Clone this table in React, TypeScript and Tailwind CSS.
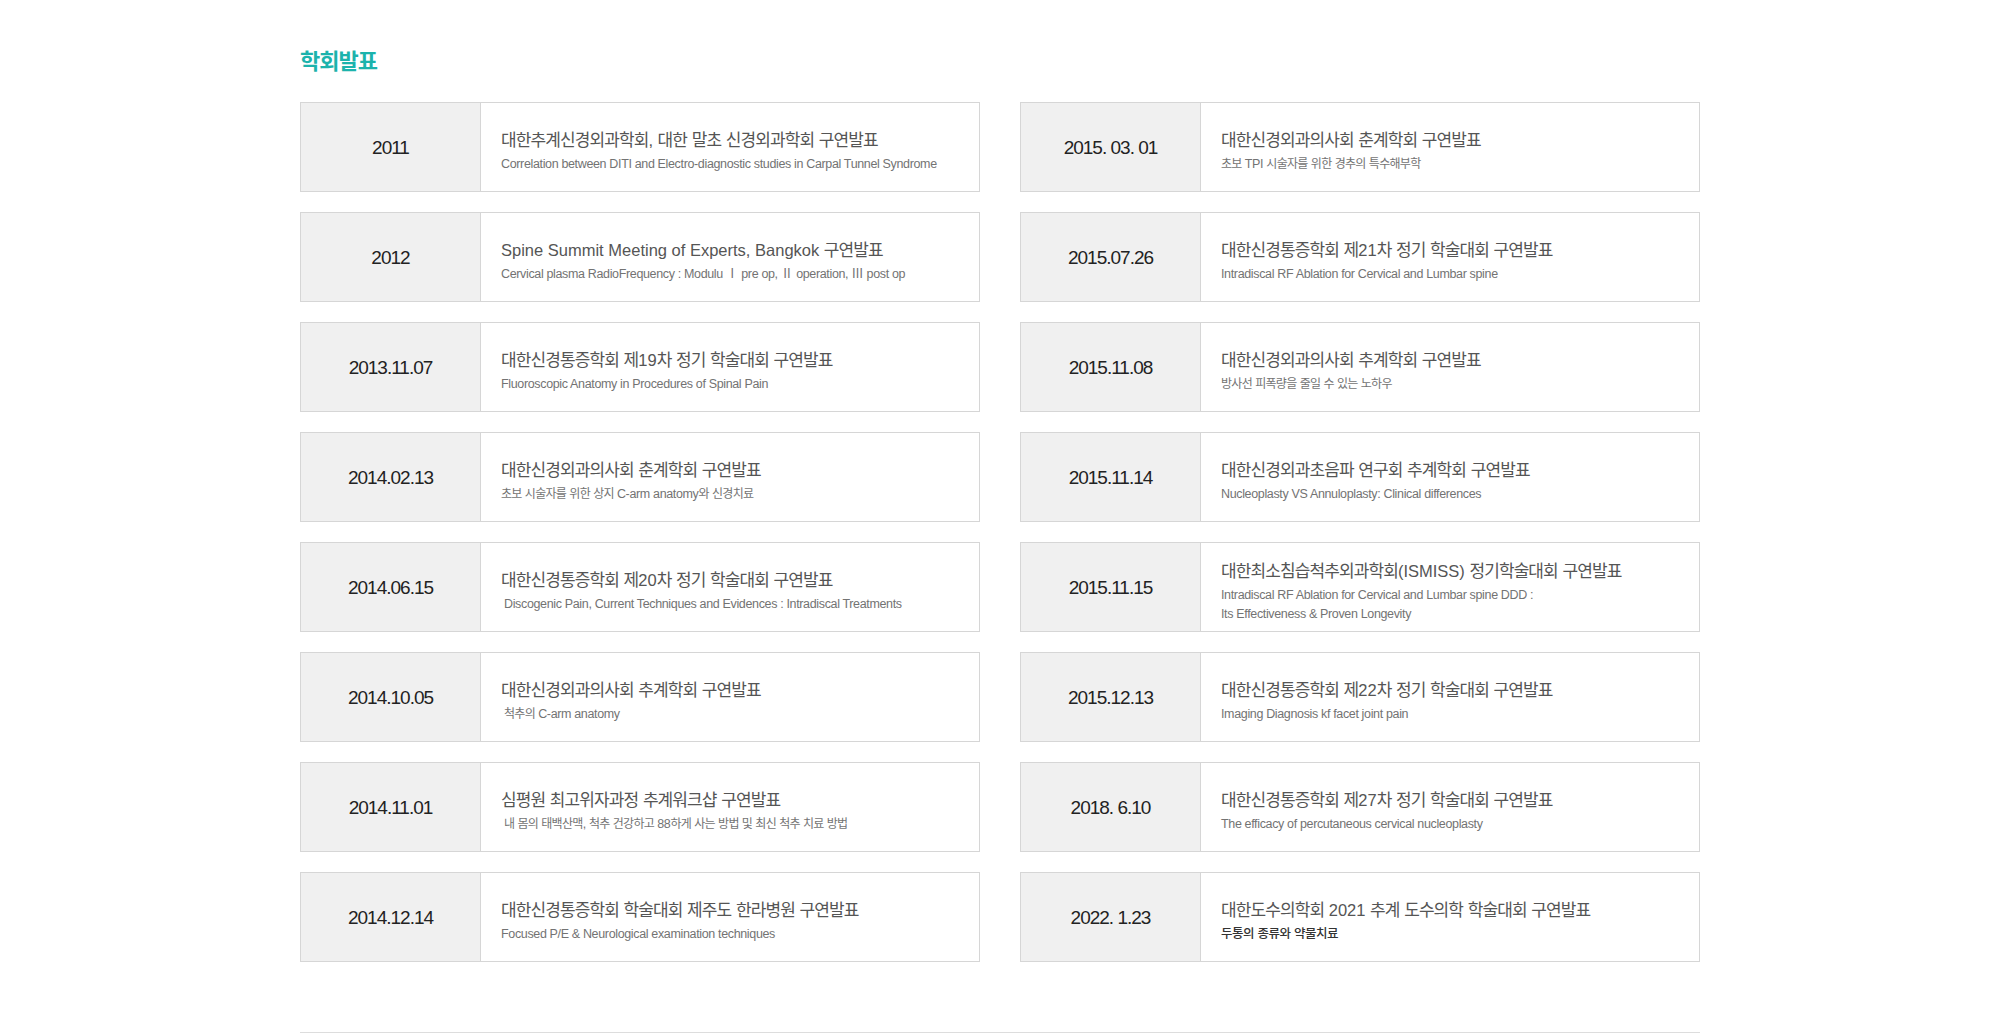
import React from "react";

type Item = { date: string; title: string; sub: string[]; dark?: boolean; indent?: boolean };

const left: Item[] = [
  { date: "2011", title: "대한추계신경외과학회, 대한 말초 신경외과학회 구연발표", sub: ["Correlation between DITI and Electro-diagnostic studies in Carpal Tunnel Syndrome"] },
  { date: "2012", title: "Spine Summit Meeting of Experts, Bangkok 구연발표", sub: ["Cervical plasma RadioFrequency : Modulu Ⅰ pre op, Ⅱ operation, Ⅲ post op"] },
  { date: "2013.11.07", title: "대한신경통증학회 제19차 정기 학술대회 구연발표", sub: ["Fluoroscopic Anatomy in Procedures of Spinal Pain"] },
  { date: "2014.02.13", title: "대한신경외과의사회 춘계학회 구연발표", sub: ["초보 시술자를 위한 상지 C-arm anatomy와 신경치료"] },
  { date: "2014.06.15", title: "대한신경통증학회 제20차 정기 학술대회 구연발표", sub: ["Discogenic Pain, Current Techniques and Evidences : Intradiscal Treatments"], indent: true },
  { date: "2014.10.05", title: "대한신경외과의사회 추계학회 구연발표", sub: ["척추의 C-arm anatomy"], indent: true },
  { date: "2014.11.01", title: "심평원 최고위자과정 추계워크샵 구연발표", sub: ["내 몸의 태백산맥, 척추 건강하고 88하게 사는 방법 및 최신 척추 치료 방법"], indent: true },
  { date: "2014.12.14", title: "대한신경통증학회 학술대회 제주도 한라병원 구연발표", sub: ["Focused P/E & Neurological examination techniques"] },
];

const right: Item[] = [
  { date: "2015. 03. 01", title: "대한신경외과의사회 춘계학회 구연발표", sub: ["초보 TPI 시술자를 위한 경추의 특수해부학"] },
  { date: "2015.07.26", title: "대한신경통증학회 제21차 정기 학술대회 구연발표", sub: ["Intradiscal RF Ablation for Cervical and Lumbar spine"] },
  { date: "2015.11.08", title: "대한신경외과의사회 추계학회 구연발표", sub: ["방사선 피폭량을 줄일 수 있는 노하우"] },
  { date: "2015.11.14", title: "대한신경외과초음파 연구회 추계학회 구연발표", sub: ["Nucleoplasty VS Annuloplasty: Clinical differences"] },
  { date: "2015.11.15", title: "대한최소침습척추외과학회(ISMISS) 정기학술대회 구연발표", sub: ["Intradiscal RF Ablation for Cervical and Lumbar spine DDD :", "Its Effectiveness & Proven Longevity"] },
  { date: "2015.12.13", title: "대한신경통증학회 제22차 정기 학술대회 구연발표", sub: ["Imaging Diagnosis kf facet joint pain"] },
  { date: "2018. 6.10", title: "대한신경통증학회 제27차 정기 학술대회 구연발표", sub: ["The efficacy of percutaneous cervical nucleoplasty"] },
  { date: "2022. 1.23", title: "대한도수의학회 2021 추계 도수의학 학술대회 구연발표", sub: ["두통의 종류와 약물치료"], dark: true },
];

const SPLIT = /([\u0000-\u007F\u2160-\u217F]+)/;
const IS_LATIN = /^[\u0000-\u007F\u2160-\u217F]+$/;

function Runs({ text, latin, ko }: { text: string; latin: string; ko: string }) {
  return (
    <>
      {text
        .split(SPLIT)
        .filter((p) => p.length > 0)
        .map((p, i) => (
          <span key={i} className={IS_LATIN.test(p) ? latin : ko}>
            {p}
          </span>
        ))}
    </>
  );
}

function Card({ item }: { item: Item }) {
  return (
    <div className="flex h-[90px] border border-[#d6d6d6] bg-white">
      <div className="flex w-[180px] shrink-0 items-center justify-center border-r border-[#d6d6d6] bg-[#f0f0f0] text-[19px] leading-none tracking-[-1px] text-[#222]">
        {item.date}
      </div>
      <div className="flex flex-1 flex-col justify-center pl-5 pt-[8px] whitespace-nowrap">
        <div className="leading-[22px] text-[#555]">
          <Runs text={item.title} latin="text-[16.5px] tracking-[0px]" ko="text-[17px] tracking-[-0.9px]" />
        </div>
        <div className={`mt-[2px] leading-[17px] ${item.dark ? "text-[#333]" : "text-[#737373]"} ${item.indent ? "pl-[3px]" : ""}`}>
          {item.sub.map((s, i) => (
            <div key={i}>
              {item.dark ? (
                <Runs text={s} latin="text-[12.5px] tracking-[0px]" ko="text-[12.5px] font-medium tracking-[-0.5px]" />
              ) : (
                <Runs text={s} latin="text-[12.5px] tracking-[-0.35px]" ko="text-[12px] tracking-[-0.7px]" />
              )}
            </div>
          ))}
        </div>
      </div>
    </div>
  );
}

export default function App() {
  const cells: Item[] = [];
  left.forEach((l, i) => {
    cells.push(l);
    cells.push(right[i]);
  });
  return (
    <div className="min-h-screen bg-white font-['Liberation_Sans','Noto_Sans_CJK_KR',sans-serif]">
      <div className="mx-auto w-[1400px] pt-[48px]">
        <h2 className="font-['Noto_Sans_CJK_KR',sans-serif] text-[22px] font-bold leading-[22px] tracking-[-1px] text-[#1cb3ac]">
          학회발표
        </h2>
        <div className="mt-[32px] grid grid-cols-2 gap-x-10 gap-y-5">
          {cells.map((c, i) => (
            <Card key={i} item={c} />
          ))}
        </div>
        <div className="mt-[70px] h-[120px] border-t border-[#dddddd]" />
      </div>
    </div>
  );
}
